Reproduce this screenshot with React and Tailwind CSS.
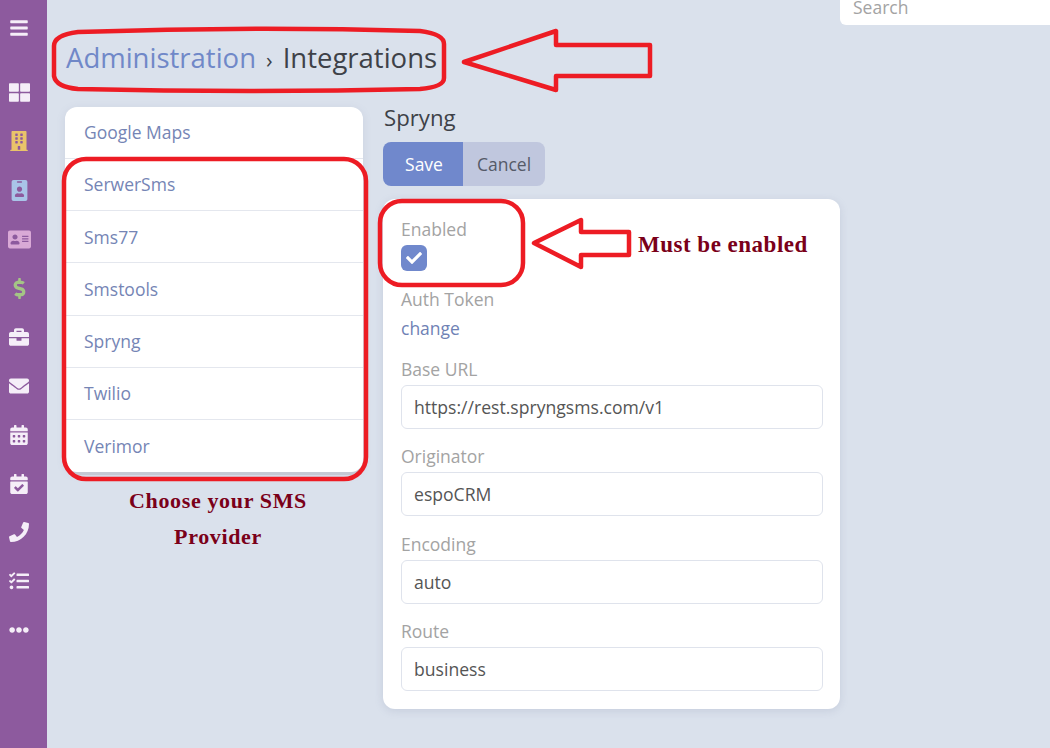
import React from "react";
import { FaBars, FaThLarge, FaBuilding, FaIdBadge, FaAddressCard, FaDollarSign, FaBriefcase, FaEnvelope, FaCalendarAlt, FaCalendarCheck, FaPhone, FaTasks, FaEllipsisH, FaCheck } from "react-icons/fa";

const nav = [
  [FaThLarge, "text-[#f5eef8]", 21],
  [FaBuilding, "text-[#e9c46a]", 20],
  [FaIdBadge, "text-[#a9c4e8]", 21],
  [FaAddressCard, "text-[#d9a9d6]", 23],
  [FaDollarSign, "text-[#a4c585]", 21],
  [FaBriefcase, "text-[#f5eef8]", 20],
  [FaEnvelope, "text-[#f5eef8]", 20],
  [FaCalendarAlt, "text-[#f5eef8]", 20],
  [FaCalendarCheck, "text-[#f5eef8]", 20],
  [FaPhone, "text-[#f5eef8]", 20],
  [FaTasks, "text-[#f5eef8]", 20],
  [FaEllipsisH, "text-[#f5eef8]", 20],
];

const providers = ["SerwerSms", "Sms77", "Smstools", "Spryng", "Twilio", "Verimor"];

function Field({ label, value, className }) {
  return (
    <div className={className}>
      <div className="text-[#a3a3a3] text-[17.5px] leading-[24px]">{label}</div>
      <div className="mt-[4px] h-[44px] border border-[#dfe3ec] rounded-[6px] px-[12px] flex items-center text-[17.6px] text-[#555]">{value}</div>
    </div>
  );
}

export default function App() {
  return (
    <div className="relative w-[1050px] h-[748px] overflow-hidden flex bg-[#dae1ec] font-['Open_Sans',sans-serif]">
      <aside className="w-[47px] shrink-0 bg-[#8d5a9e] flex flex-col items-center pr-[9px] pt-[18px]">
        <FaBars size={20} className="text-[#f5eef8]" />
        <div className="mt-[30px] flex flex-col">
          {nav.map(([Icon, color, size], i) => (
            <div key={i} className="h-[48.9px] flex items-center justify-center">
              <Icon size={size} className={color} />
            </div>
          ))}
        </div>
      </aside>

      <main className="flex-1 flex flex-col min-w-0">
        <div className="flex justify-end">
          <div className="w-[210px] h-[25px] bg-white rounded-bl-[6px] pl-[13px] text-[17.5px] leading-[15px] text-[#a3a3a3] overflow-hidden">Search</div>
        </div>
        <h1 className="mt-[14px] ml-[19px] text-[27.5px] leading-[38px] text-[#3e4148] whitespace-nowrap">
          <span className="text-[#7088c8]">Administration</span>
          <span className="text-[22px] mx-[10px]">›</span>
          <span>Integrations</span>
        </h1>

        <div className="mt-[-1px] ml-[18px] flex items-start">
          <div className="mt-[30px] w-[298px] bg-white rounded-[12px] shadow-[0_3px_0_#c5c9d3,0_2px_8px_rgba(120,130,160,0.15)]">
            <div className="h-[52px] px-[19px] flex items-center text-[17.5px] text-[#7585b5] border-b border-[#e4e7ee]">Google Maps</div>
            {providers.map((p, i) => (
              <div key={p} className={`h-[52.2px] px-[19px] flex items-center text-[17.5px] text-[#7585b5] ${i < providers.length - 1 ? "border-b border-[#e4e7ee]" : ""}`}>{p}</div>
            ))}
          </div>

          <div className="ml-[20px] mt-[29px] w-[457px]">
            <h2 className="text-[22.2px] leading-[24px] pl-[1px] text-[#3e4148]">Spryng</h2>
            <div className="mt-[12px] flex w-[162px] h-[44px] rounded-[8px] overflow-hidden text-[17.5px]">
              <div className="w-[80px] pl-[2px] bg-[#7088cc] text-white flex items-center justify-center font-medium">Save</div>
              <div className="flex-1 bg-[#c0c7de] text-[#555a68] flex items-center justify-center">Cancel</div>
            </div>
            <div className="mt-[13px] h-[510px] bg-white rounded-[12px] pl-[18px] pr-[17px] pt-[18px] shadow-[0_2px_8px_rgba(120,130,160,0.2)]">
              <div className="text-[#a3a3a3] text-[17.5px] leading-[24px]">Enabled</div>
              <div className="mt-[4px] w-[26px] h-[26px] rounded-[6px] bg-[#7088cc] flex items-center justify-center">
                <FaCheck size={16} className="text-white" />
              </div>
              <div className="mt-[16px] text-[#a3a3a3] text-[17.5px] leading-[24px]">Auth Token</div>
              <div className="mt-[5px] text-[#6f82b5] text-[17.5px] leading-[24px]">change</div>
              <Field className="mt-[17px]" label="Base URL" value="https://rest.spryngsms.com/v1" />
              <Field className="mt-[15px]" label="Originator" value="espoCRM" />
              <Field className="mt-[16px]" label="Encoding" value="auto" />
              <Field className="mt-[15px]" label="Route" value="business" />
            </div>
          </div>
        </div>
      </main>

      <svg className="absolute left-0 top-0 pointer-events-none" width="1050" height="748" fill="none" stroke="#ed1c24" strokeWidth="4.5" strokeLinejoin="round">
        <path d="M78 32 Q250 26 420 31 Q444 34 444 44 L444 78 Q444 87 420 89 Q250 93 78 89 Q56 87 54 76 L54 46 Q54 35 78 32 Z" />
        <path d="M464 62 L556 31 L556 45 L650 45 L650 76 L556 76 L556 90 Z" />
        <rect x="64" y="159" width="302" height="320" rx="22" />
        <rect x="380" y="201" width="143" height="84" rx="22" />
        <path d="M534 243 L581 220 L581 232 L629 232 L629 255 L581 255 L581 267 Z" />
      </svg>

      <div className="absolute left-[638px] top-[232px] text-[23px] leading-[26px] font-bold text-[#7a0019] font-['Liberation_Serif',serif] tracking-[0.5px] whitespace-nowrap">Must be enabled</div>
      <div className="absolute left-[64px] top-[483px] w-[308px] text-center text-[22px] leading-[36px] font-bold text-[#7a0019] font-['Liberation_Serif',serif] tracking-[0.65px]">
        <div>Choose your SMS</div>
        <div>Provider</div>
      </div>
    </div>
  );
}
